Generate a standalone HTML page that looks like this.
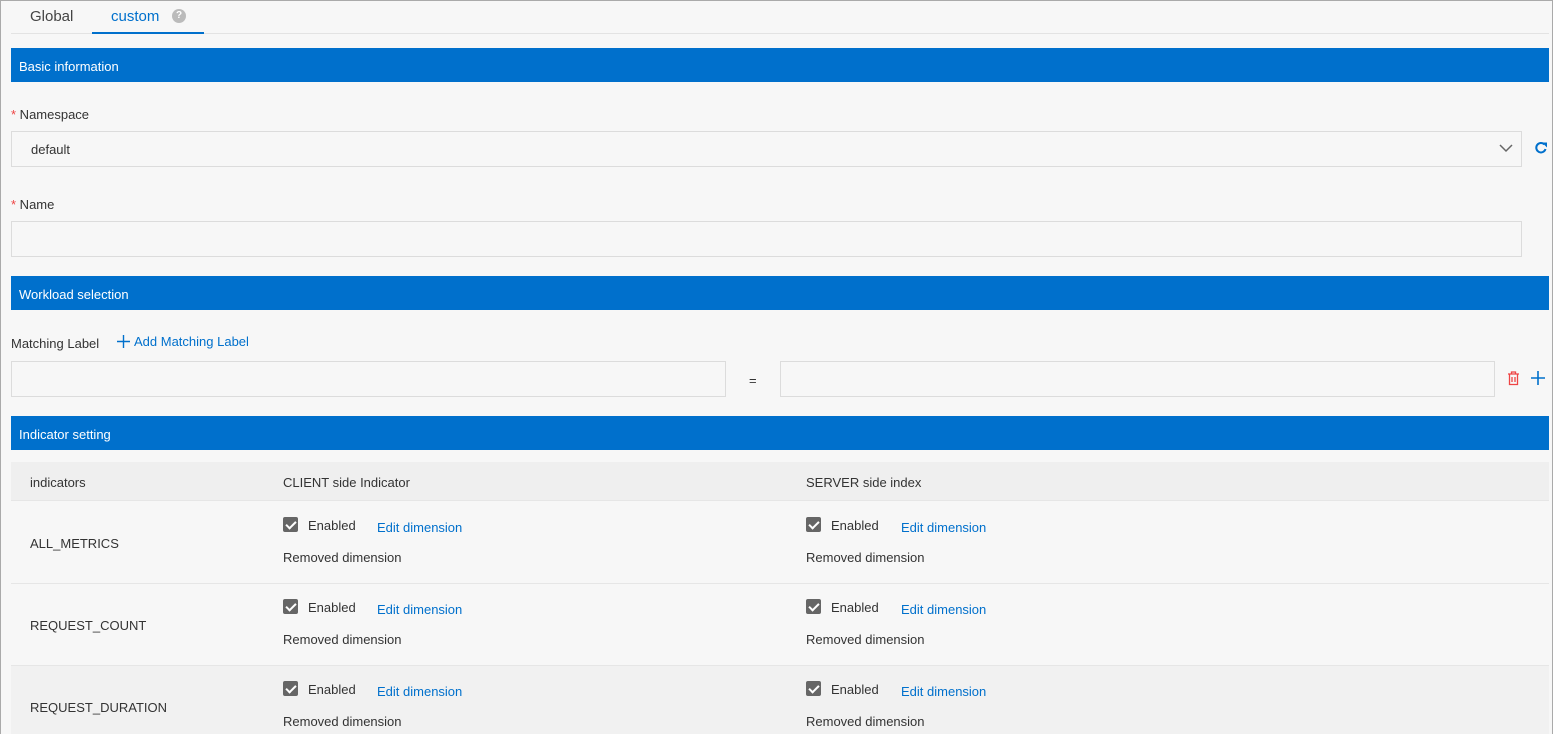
<!DOCTYPE html>
<html><head><style>
*{box-sizing:border-box;margin:0;padding:0}
body{width:1553px;height:734px;overflow:hidden;background:#f7f7f7;font-family:"Liberation Sans",sans-serif;font-size:13px;color:#333;position:relative}
.frame{position:absolute;left:0;top:0;width:1553px;height:734px;border:1px solid #aaa;border-bottom:none}
.a{position:absolute;white-space:nowrap}
.bar{position:absolute;left:11px;width:1538px;height:34px;background:#0070cc;color:#fff;font-size:13px;line-height:37px;padding-left:8px}
.box{position:absolute;border:1px solid #dcdcdc;background:#f7f7f7}
.star{color:#e44}
.cb{position:absolute;width:15px;height:15px;background:#666;border-radius:2px}
.cb:after{content:"";position:absolute;left:5px;top:2px;width:4px;height:8px;border:solid #fff;border-width:0 2px 2px 0;transform:rotate(45deg)}
.link{color:#0070cc}
.row{position:absolute;left:11px;width:1538px;border-bottom:1px solid #e6e6e6}
</style></head><body>
<div class="frame"></div>
<div class="a" style="left:30px;top:8px;font-size:15px;color:#444">Global</div>
<div class="a" style="left:111px;top:8px;font-size:15px;color:#0070cc">custom</div>
<div class="a" style="left:172px;top:9px;width:14px;height:14px;border-radius:50%;background:#bbb;color:#fff;font-size:10px;font-weight:bold;text-align:center;line-height:14px">?</div>
<div class="a" style="left:11px;top:33px;width:1538px;height:1px;background:#e3e3e3"></div>
<div class="a" style="left:92px;top:32px;width:112px;height:2px;background:#0070cc"></div>

<div class="bar" style="top:48px">Basic information</div>
<div class="a" style="left:11px;top:107px"><span class="star">*</span> Namespace</div>
<div class="box" style="left:11px;top:131px;width:1511px;height:36px"><span class="a" style="left:19px;top:10px">default</span>
<svg class="a" style="right:8px;top:11px" width="14" height="10" viewBox="0 0 14 10"><path d="M1 2l6 6 6-6" stroke="#666" stroke-width="1.5" fill="none"/></svg></div>
<svg class="a" style="left:1534px;top:141px" width="14" height="14" viewBox="0 0 14 14"><path d="M11.5 8a4.7 4.7 0 1 1-1.2-4.6" stroke="#0070cc" stroke-width="2" fill="none"/><path d="M8 1.5h5v5z" fill="#0070cc"/></svg>
<div class="a" style="left:11px;top:197px"><span class="star">*</span> Name</div>
<div class="box" style="left:11px;top:221px;width:1511px;height:36px"></div>

<div class="bar" style="top:276px">Workload selection</div>
<div class="a" style="left:11px;top:336px">Matching Label</div>
<svg class="a" style="left:117px;top:335px" width="13" height="13" viewBox="0 0 13 13"><path d="M6.5 0v13M0 6.5h13" stroke="#0070cc" stroke-width="1.4"/></svg>
<div class="a link" style="left:134px;top:334px">Add Matching Label</div>
<div class="box" style="left:11px;top:361px;width:715px;height:36px"></div>
<div class="a" style="left:749px;top:373px">=</div>
<div class="box" style="left:780px;top:361px;width:715px;height:36px"></div>
<svg class="a" style="left:1507px;top:371px" width="13" height="15" viewBox="0 0 13 15"><path d="M1 3h11M4.5 3V1h4v2M2.5 3.5v10h8v-10M5 6v5M8 6v5" stroke="#e44" stroke-width="1.3" fill="none"/></svg>
<svg class="a" style="left:1531px;top:371px" width="14" height="14" viewBox="0 0 14 14"><path d="M7 0v14M0 7h14" stroke="#0070cc" stroke-width="1.6"/></svg>

<div class="bar" style="top:416px">Indicator setting</div>
<div class="row" style="top:462px;height:39px;background:#efefef"></div>
<div class="a" style="left:30px;top:475px">indicators</div>
<div class="a" style="left:283px;top:475px">CLIENT side Indicator</div>
<div class="a" style="left:806px;top:475px">SERVER side index</div>

<div class="row" style="top:501px;height:83px"></div>
<div class="row" style="top:584px;height:82px"></div>
<div class="row" style="top:666px;height:68px;background:#f1f1f1;border:none"></div>

<div class="a" style="left:30px;top:536px">ALL_METRICS</div>
<div class="a" style="left:30px;top:618px">REQUEST_COUNT</div>
<div class="a" style="left:30px;top:700px">REQUEST_DURATION</div>

<div class="cb" style="left:283px;top:517px"></div><div class="a" style="left:308px;top:518px">Enabled</div><div class="a link" style="left:377px;top:520px">Edit dimension</div><div class="a" style="left:283px;top:550px">Removed dimension</div>
<div class="cb" style="left:806px;top:517px"></div><div class="a" style="left:831px;top:518px">Enabled</div><div class="a link" style="left:901px;top:520px">Edit dimension</div><div class="a" style="left:806px;top:550px">Removed dimension</div>

<div class="cb" style="left:283px;top:599px"></div><div class="a" style="left:308px;top:600px">Enabled</div><div class="a link" style="left:377px;top:602px">Edit dimension</div><div class="a" style="left:283px;top:632px">Removed dimension</div>
<div class="cb" style="left:806px;top:599px"></div><div class="a" style="left:831px;top:600px">Enabled</div><div class="a link" style="left:901px;top:602px">Edit dimension</div><div class="a" style="left:806px;top:632px">Removed dimension</div>

<div class="cb" style="left:283px;top:681px"></div><div class="a" style="left:308px;top:682px">Enabled</div><div class="a link" style="left:377px;top:684px">Edit dimension</div><div class="a" style="left:283px;top:714px">Removed dimension</div>
<div class="cb" style="left:806px;top:681px"></div><div class="a" style="left:831px;top:682px">Enabled</div><div class="a link" style="left:901px;top:684px">Edit dimension</div><div class="a" style="left:806px;top:714px">Removed dimension</div>
</body></html>
